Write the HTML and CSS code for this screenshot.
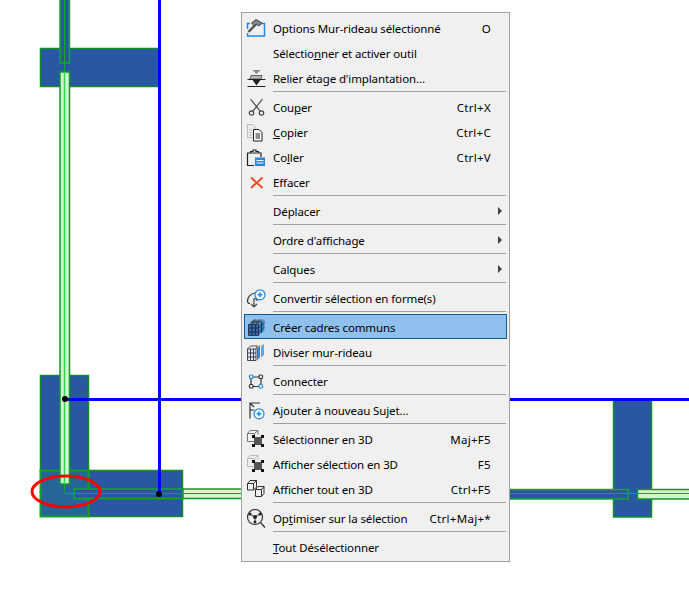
FILE: index.html
```html
<!DOCTYPE html>
<html lang="fr">
<head>
<meta charset="utf-8">
<title>Menu contextuel</title>
<link rel="stylesheet" href="styles.css">
</head>
<body>
<svg class="plan" width="689" height="590" viewBox="0 0 689 590">
  <g class="col"><rect x="40.5" y="48.5" width="118" height="38"/></g>
  <rect class="wall-dark" x="60" y="-5" width="9.5" height="68"/>
  <line class="axis" x1="64.5" y1="0" x2="64.5" y2="72"/>
  <g class="col">
    <rect x="40.5" y="375.5" width="48" height="95"/>
    <rect x="88.5" y="470.5" width="94" height="46"/>
    <rect class="tint" x="40.5" y="470.5" width="48" height="46"/>
    <rect x="613.5" y="399" width="38" height="118"/>
  </g>
  <rect class="wall" x="60" y="72" width="9.5" height="412"/>
  <line class="axis light" x1="64.5" y1="72" x2="64.5" y2="484"/>
  <polyline class="axis" points="64.5,484 64.5,493.5 689,493.5"/>
  <rect class="wall-dark" x="74" y="489" width="109" height="9.500"/>
  <rect class="wall" x="183" y="489" width="70" height="9.500"/>
  <rect class="wall-dark" x="500" y="489.5" width="128" height="9.5"/>
  <rect class="wall" x="637.5" y="489.5" width="60" height="9.5"/>
  <line class="axis" x1="74" y1="493.5" x2="689" y2="493.5"/>
  <line class="beam" x1="159.5" y1="0" x2="159.5" y2="494"/>
  <line class="beam" x1="65" y1="399.5" x2="689" y2="399.5"/>
  <circle class="dot" cx="65" cy="399" r="3"/>
  <circle class="dot" cx="159" cy="494" r="3"/>
  <ellipse class="mark" cx="66" cy="491.5" rx="34" ry="15.5"/>
</svg>

<div class="menu">
  <div class="item">
    <svg class="ic" viewBox="0 0 20 20"><path class="bl" d="M1.500 10V4.500H4M15 4.500h3.500V17H1.500v-3"/><path class="hd" d="M2.500 13 10 5"/><path class="gr" d="M5.500 4 10 .5l6 3.500-3 3-3-2-1.500 2z"/></svg>
    <span class="label">Options Mur-rideau sélectionné</span><span class="key">O</span>
  </div>
  <div class="item">
    <span class="ic"></span>
    <span class="label">Sélectio<u>n</u>ner et activer outil</span>
  </div>
  <div class="item">
    <svg class="ic" viewBox="0 0 20 20"><path class="gf" d="M6.500 1h8l-4 4z"/><path class="gh" d="M5 6.500h11l-1 3.500H4z"/><path class="ln" d="M1.500 10.500h18M1.500 17.500h18"/><path class="kf" d="M6.500 11h8l-4 5.500z"/></svg>
    <span class="label">Relier étage d'implantation...</span>
  </div>
  <div class="sep"></div>
  <div class="item">
    <svg class="ic" viewBox="0 0 20 20"><path class="ln gy" d="M4.500 1 14 13M16.500 1 7 13"/><circle class="ln gy" cx="5.500" cy="15" r="2.200"/><circle class="ln gy" cx="15.500" cy="15" r="2.200"/></svg>
    <span class="label">Cou<u>p</u>er</span><span class="key">Ctrl+X</span>
  </div>
  <div class="item">
    <svg class="ic" viewBox="0 0 20 20"><path class="pg" d="M1.500 1.500H7l2 2v11H1.500z"/><path class="ln lg" d="M3 7h3M3 9.500h3M3 12h3"/><path class="pw" d="M7.500 6.500H13l3 3v8.500H7.500z"/><path class="ln thin" d="M9.500 11h4.500M9.500 13h4.500M9.500 15h4.500"/></svg>
    <span class="label"><u>C</u>opier</span><span class="key">Ctrl+C</span>
  </div>
  <div class="item">
    <svg class="ic" viewBox="0 0 20 20"><path class="ln" d="M8 17.500H1.500V5H15v4"/><path class="ln" d="M4.500 5V3.500h2.500V2h3v1.500h2.500V5"/><path class="blf" d="M9 9.500h10v8.500H9z"/><path class="ln wt" d="M10.500 12.500h7M10.500 15h7"/></svg>
    <span class="label">Co<u>l</u>ler</span><span class="key">Ctrl+V</span>
  </div>
  <div class="item">
    <svg class="ic" viewBox="0 0 20 20"><path class="x" d="M5 4.500 16.500 15M16.500 4.500 5 15"/></svg>
    <span class="label">Effacer</span>
  </div>
  <div class="sep"></div>
  <div class="item sub"><span class="ic"></span><span class="label">Déplacer</span></div>
  <div class="sep"></div>
  <div class="item sub"><span class="ic"></span><span class="label">Ordre d'affichage</span></div>
  <div class="sep"></div>
  <div class="item sub"><span class="ic"></span><span class="label">Calques</span></div>
  <div class="sep"></div>
  <div class="item">
    <svg class="ic" viewBox="0 0 20 20"><path class="ln gd" d="M9 4C5 4.500 1.500 8 1.500 12c0 1.500 1 2.500 2.500 2.500"/><path class="ln gy" d="M8 9.500V18M5 15l3 3 3-3M8 9.500c2 0 3 1 3.500 2.500"/><circle class="circ" cx="14" cy="5.800" r="5"/><path class="bl thin" d="M11.500 5.800h5M14 3.300v5"/></svg>
    <span class="label">Convertir sélection en forme(s)</span>
  </div>
  <div class="sep"></div>
  <div class="item active">
    <svg class="ic" viewBox="0 0 20 20"><path class="cubeb" d="M2.500 6.500h10v11h-10z"/><path class="cubet" d="M2.500 6.500l5-5h11l-6 5z"/><path class="cubes" d="M12.500 6.500l6-5v11l-6 5z"/><path class="grid" d="M2.500 6.500h10v11h-10zM2.500 10h10M2.500 14h10M6 6.500v11M9.500 6.500v11M5 4h11M9 1.500 5.500 6.500M14 1.500 9.500 6.500M12.500 10l6-5M12.500 14l6-5M15.500 4v11"/></svg>
    <span class="label">Créer cadres communs</span>
  </div>
  <div class="item">
    <svg class="ic" viewBox="0 0 20 20"><path class="wfill" d="M1.500 6h8.500v11.500H1.500z"/><path class="grid" d="M1.500 6h8.500v11.500H1.500zM1.500 6l3-3h7l-1.500 3M1.500 10h8.500M1.500 14h8.500M4.500 6v11.500M7.500 6v11.500"/><path class="blf" d="M11 5l3-3v12l-3 3.500z"/><path class="bls" d="M15 3l3-2v11l-3 2.500z"/></svg>
    <span class="label">Diviser mur-rideau</span>
  </div>
  <div class="sep"></div>
  <div class="item">
    <svg class="ic" viewBox="0 0 20 20"><path class="ln gd" d="M7 5h6M7 14.500h6M5 7v5.500M15 7v5.500"/><rect class="bb" x="3.500" y="3" width="3.500" height="3.500" rx="1"/><rect class="kb" x="13" y="3" width="3.500" height="3.500" rx="1"/><rect class="kb" x="3.500" y="12.500" width="3.500" height="3.500" rx="1"/><rect class="bb" x="13" y="12.500" width="3.500" height="3.500" rx="1"/></svg>
    <span class="label">Connecter</span>
  </div>
  <div class="sep"></div>
  <div class="item">
    <svg class="ic" viewBox="0 0 20 20"><path class="ln gd" d="M4 17.500V2h10M4 9h4M4 2l4 4"/><circle class="circ" cx="13" cy="12.800" r="5"/><path class="bl thin" d="M10.500 12.800h5M13 10.300v5"/></svg>
    <span class="label">Ajouter à nouveau Sujet...</span>
  </div>
  <div class="sep"></div>
  <div class="item">
    <svg class="ic" viewBox="0 0 20 20"><path class="ln gm thin" d="M1.500 3.500h7v8h-7zM1.500 3.500l2.500-3h8v4M8.500 3.500l3.500-3"/><path class="sel" d="M8 7h8v8H8z"/><path class="hnd" d="M6 5h3v3H6zM15 5h3v3h-3zM6 14h3v3H6zM15 14h3v3h-3z"/></svg>
    <span class="label">Sélectionner en 3D</span><span class="key">Maj+F5</span>
  </div>
  <div class="item">
    <svg class="ic" viewBox="0 0 20 20"><path class="ln lg thin" d="M1.500 3.500h7v8h-7zM1.500 3.500l2.500-3h8v4M8.500 3.500l3.500-3"/><path class="sel" d="M8 7h8v8H8z"/><path class="hnd" d="M6 5h3v3H6zM15 5h3v3h-3zM6 14h3v3H6zM15 14h3v3h-3z"/></svg>
    <span class="label">Afficher sélection en 3D</span><span class="key">F5</span>
  </div>
  <div class="item">
    <svg class="ic" viewBox="0 0 20 20"><path class="ln gd thin" d="M1.500 3.500h6v6.500h-6zM1.500 3.500l2.500-3h6.500v6.500l-3 3M7.500 3.500l3-3"/><path class="ln gd thin" d="M9.500 9.500h6v7h-6zM9.500 9.500l2.500-3h6v7l-2.500 3M15.500 9.500l2.500-3"/></svg>
    <span class="label">Afficher tout en 3D</span><span class="key">Ctrl+F5</span>
  </div>
  <div class="sep"></div>
  <div class="item">
    <svg class="ic" viewBox="0 0 20 20"><circle class="ln gd" cx="9" cy="8" r="7.500"/><path class="ln gd" d="M14.500 13.500 19 18.500"/><path class="ln gy thin" d="M9 8 3.500 5M9 8l5-3M9 8v5.500"/><circle class="kf" cx="9" cy="8" r="2"/><circle class="kf" cx="4" cy="5" r="1.500"/><circle class="kf" cx="14" cy="5" r="1.500"/><circle class="kf" cx="9" cy="13" r="1.500"/></svg>
    <span class="label">Op<u>t</u>imiser sur la sélection</span><span class="key">Ctrl+Maj+*</span>
  </div>
  <div class="sep"></div>
  <div class="item">
    <span class="ic"></span>
    <span class="label"><u>T</u>out Désélectionner</span>
  </div>
</div>
</body>
</html>
```

FILE: styles.css
```css
html, body {
  margin: 0;
  padding: 0;
  background: #fff;
}
body {
  position: relative;
  width: 689px;
  height: 590px;
  overflow: hidden;
  font-family: "Noto Sans", "Open Sans", sans-serif;
  font-size: 11.5px;
  letter-spacing: -0.12px;
  color: #000;
}

/* plan */
.plan { position: absolute; left: 0; top: 0; display: block; }
.col rect { fill: #2a57a3; stroke: #0e8f25; stroke-width: 1.500; }
.col .tint { fill: #27649a; stroke: #12a02a; stroke-width: 2; }
.wall { fill: #d0f5d0; stroke: #0e9a25; stroke-width: 1.500; }
.wall-dark { fill: #2a57a3; stroke: #12a82a; stroke-width: 1.500; }
.axis { fill: none; stroke: #12a82a; stroke-width: 1; }
.axis.light { stroke: #30d850; stroke-width: 1.500; }
.beam { stroke: #0000ff; stroke-width: 3; }
.dot { fill: #000; }
.mark { fill: none; stroke: #f00; stroke-width: 3; }

/* menu */
.menu {
  position: absolute;
  left: 241px;
  top: 12px;
  width: 265px;
  height: 545px;
  padding: 3px 0 0 2px;
  background: #f0f0f0;
  border: 1px solid #a0a0a0;
}
.item {
  position: relative;
  z-index: 0;
  display: flex;
  align-items: center;
  box-sizing: border-box;
  width: 263px;
  height: 25px;
  padding: 0 16px 0 2px;
}
.item.active::before {
  content: "";
  position: absolute;
  z-index: -1;
  left: 0;
  right: 0;
  top: -1px;
  bottom: 1px;
  background: #90c0ee;
  border: 1px solid #0a5c9e;
}
.item.sub::after {
  content: "";
  position: absolute;
  right: 5px;
  top: 8px;
  border-left: 4px solid #404040;
  border-top: 4px solid transparent;
  border-bottom: 4px solid transparent;
}
.ic { display: block; flex: none; width: 20px; height: 20px; margin-right: 7px; }
.label { flex: 1; white-space: nowrap; }
.key { white-space: nowrap; letter-spacing: 0.3px; }
.sep { height: 1px; margin: 0 3px 3px 29px; background: #a0a0a0; }

/* icon paints */
.ic path, .ic circle, .ic rect { fill: none; }
.ic .ln { stroke: #222; stroke-width: 1.200; }
.ic .thin { stroke-width: 1; }
.ic .gy { stroke: #444; }
.ic .gd { stroke: #333; }
.ic .gm { stroke: #777; }
.ic .lg { stroke: #bbb; }
.ic .wt { stroke: #fff; }
.ic .bl { stroke: #1e88e5; stroke-width: 1.500; }
.ic .gr { fill: #808890; stroke: #444; stroke-width: 1; }
.ic .hd { stroke: #555; stroke-width: 2.500; }
.ic .gf { fill: #888; }
.ic .gh { fill: #bbb; stroke: #444; stroke-width: .8; }
.ic .kf { fill: #222; }
.ic .pg { fill: #eee; stroke: #bbb; }
.ic .pw { fill: #fff; stroke: #222; }
.ic .blf { fill: #2a86e0; }
.ic .bls { fill: #5aa8ec; }
.ic .x { stroke: #f4492a; stroke-width: 2; }
.ic .circ { fill: #fff; stroke: #1e88e5; stroke-width: 1.200; }
.ic .cubeb { fill: #2c6fb0; }
.ic .cubet { fill: #58a; }
.ic .cubes { fill: #3a88c8; }
.ic .wfill { fill: #dfe6ee; }
.ic .grid { stroke: #223; stroke-width: .8; }
.ic .bb { fill: #fff; stroke: #1e88e5; stroke-width: 1.200; }
.ic .kb { fill: #fff; stroke: #333; stroke-width: 1.200; }
.ic .sel { fill: #555; }
.ic .hnd { fill: #111; }
```
